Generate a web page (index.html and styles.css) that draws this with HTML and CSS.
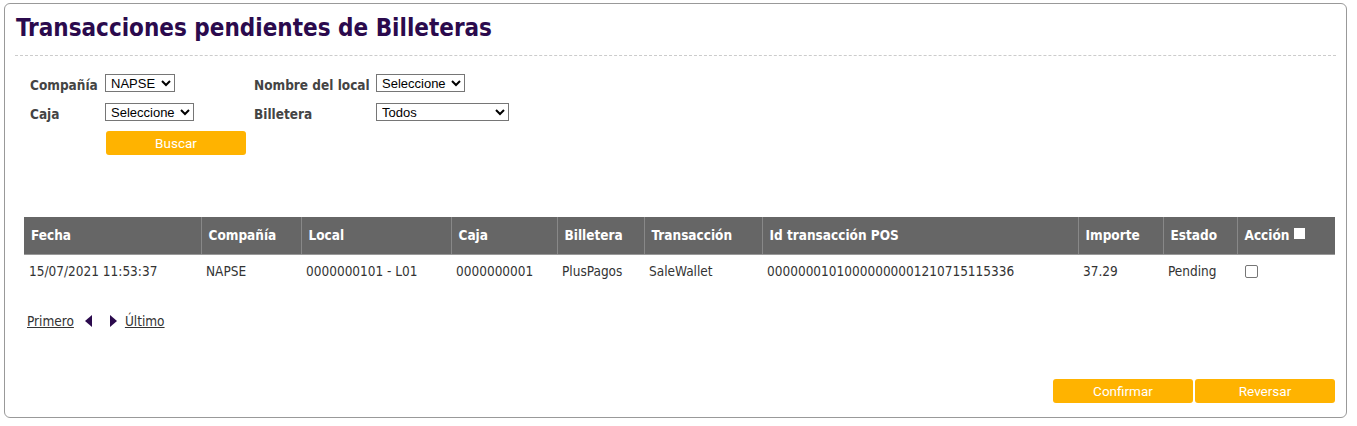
FILE: index.html
```html
<!DOCTYPE html>
<html lang="es">
<head>
<meta charset="utf-8">
<title>Transacciones pendientes de Billeteras</title>
<link rel="stylesheet" href="styles.css">
</head>
<body>
<div class="panel">
  <h1 class="title">Transacciones pendientes de Billeteras</h1>
  <div class="divider"></div>
  <form class="filters">
    <label class="lbl">Compañía</label>
    <div class="cell"><select class="sel"><option>NAPSE</option></select></div>
    <label class="lbl">Nombre del local</label>
    <div class="cell"><select class="sel"><option>Seleccione</option></select></div>
    <label class="lbl">Caja</label>
    <div class="cell"><select class="sel"><option>Seleccione</option></select></div>
    <label class="lbl">Billetera</label>
    <div class="cell"><select class="sel sel-wide"><option>Todos</option></select></div>
    <div></div>
    <div class="cell"><button type="button" class="btn btn-search">Buscar</button></div>
  </form>

  <table class="grid">
    <colgroup>
      <col style="width:177px"><col style="width:100px"><col style="width:150px"><col style="width:106px"><col style="width:87px"><col style="width:118px"><col style="width:316px"><col style="width:85px"><col style="width:74px"><col style="width:98px">
    </colgroup>
    <thead>
      <tr>
        <th>Fecha</th><th>Compañía</th><th>Local</th><th>Caja</th><th>Billetera</th><th>Transacción</th><th>Id transacción POS</th><th>Importe</th><th>Estado</th><th>Acción <span class="hdr-check"></span></th>
      </tr>
    </thead>
    <tbody>
      <tr>
        <td>15/07/2021 11:53:37</td><td>NAPSE</td><td>0000000101 - L01</td><td>0000000001</td><td>PlusPagos</td><td>SaleWallet</td><td>00000001010000000001210715115336</td><td>37.29</td><td>Pending</td><td><span class="row-check"></span></td>
      </tr>
    </tbody>
  </table>

  <div class="pager">
    <a href="#" class="pg-link">Primero</a>
    <span class="tri tri-left"></span>
    <span class="tri tri-right"></span>
    <a href="#" class="pg-link">Último</a>
  </div>

  <div class="actions">
    <button type="button" class="btn">Confirmar</button>
    <button type="button" class="btn">Reversar</button>
  </div>
</div>
</body>
</html>
```

FILE: styles.css
```css
html, body {
  margin: 0;
  padding: 0;
  background: #fff;
}
body {
  font-family: "DejaVu Sans Condensed", "DejaVu Sans", sans-serif;
  font-size: 13.5px;
  color: #333;
}
.panel {
  margin: 3px 0 0 4px;
  width: 1343px;
  height: 415px;
  box-sizing: border-box;
  border: 1px solid #999;
  border-radius: 6px;
  padding: 0 10px;
  display: flex;
  flex-direction: column;
}
.title {
  margin: 0;
  padding: 8px 0 0 1px;
  height: 33px;
  font-size: 24px;
  line-height: 32px;
  font-weight: bold;
  color: #2b0a4d;
}
.divider {
  margin-top: 10px;
  border-top: 1px dashed #ccc;
}
.filters {
  margin: 18px 0 0 15px;
  display: grid;
  grid-template-columns: 75px 149px 122px 200px;
  grid-auto-rows: 29px;
  align-items: start;
}
.lbl {
  font-weight: bold;
  color: #444;
  line-height: 18px;
  padding-top: 2px;
  white-space: nowrap;
}
.cell {
  display: flex;
}
.sel {
  font-family: "Liberation Sans", Arial, sans-serif;
  font-size: 13px;
  height: 18px;
  padding: 0 2px 0 1px;
  border: 1px solid #767676;
  border-radius: 0;
  background: #fff;
  color: #000;
}
.sel-wide {
  width: 133px;
}
.btn {
  font-family: Roboto, "Liberation Sans", sans-serif;
  font-size: 13.5px;
  font-weight: normal;
  color: #fff;
  background: #ffb300;
  border: 0;
  border-radius: 3px;
  width: 140px;
  height: 24px;
  padding: 0;
  cursor: pointer;
}
.btn-search {
  margin: -1px 0 0 1px;
}
.grid {
  margin: 56px 0 0 9px;
  width: 1311px;
  border-collapse: collapse;
  table-layout: fixed;
}
.grid th {
  background: #666;
  color: #fff;
  font-weight: bold;
  text-align: left;
  height: 37px;
  padding: 0 0 0 7px;
  border-left: 1px solid #888;
  border-bottom: 1px solid #999;
  box-sizing: border-box;
  white-space: nowrap;
}
.grid th:first-child {
  border-left: 0;
}
.grid td {
  height: 32px;
  padding: 0 0 0 5px;
  color: #333;
  white-space: nowrap;
}
.hdr-check {
  display: inline-block;
  width: 11px;
  height: 11px;
  background: #fff;
  vertical-align: 1px;
}
.row-check {
  display: inline-block;
  width: 11px;
  height: 11px;
  border: 1px solid #767676;
  border-radius: 2px;
  background: #fff;
  margin-left: 3px;
  vertical-align: -2px;
}
.pager {
  margin: 26px 0 0 12px;
  display: flex;
  align-items: center;
  height: 16px;
}
.pg-link {
  color: #333;
  text-decoration: underline;
}
.tri {
  width: 0;
  height: 0;
  border-top: 6px solid transparent;
  border-bottom: 6px solid transparent;
}
.tri-left {
  border-right: 7px solid #2b0a4d;
  margin-left: 11px;
}
.tri-right {
  border-left: 7px solid #2b0a4d;
  margin-left: 18px;
  margin-right: 8px;
}
.actions {
  margin-top: auto;
  margin-bottom: 14px;
  display: flex;
  justify-content: flex-end;
  gap: 2px;
  padding-right: 1px;
}
```
